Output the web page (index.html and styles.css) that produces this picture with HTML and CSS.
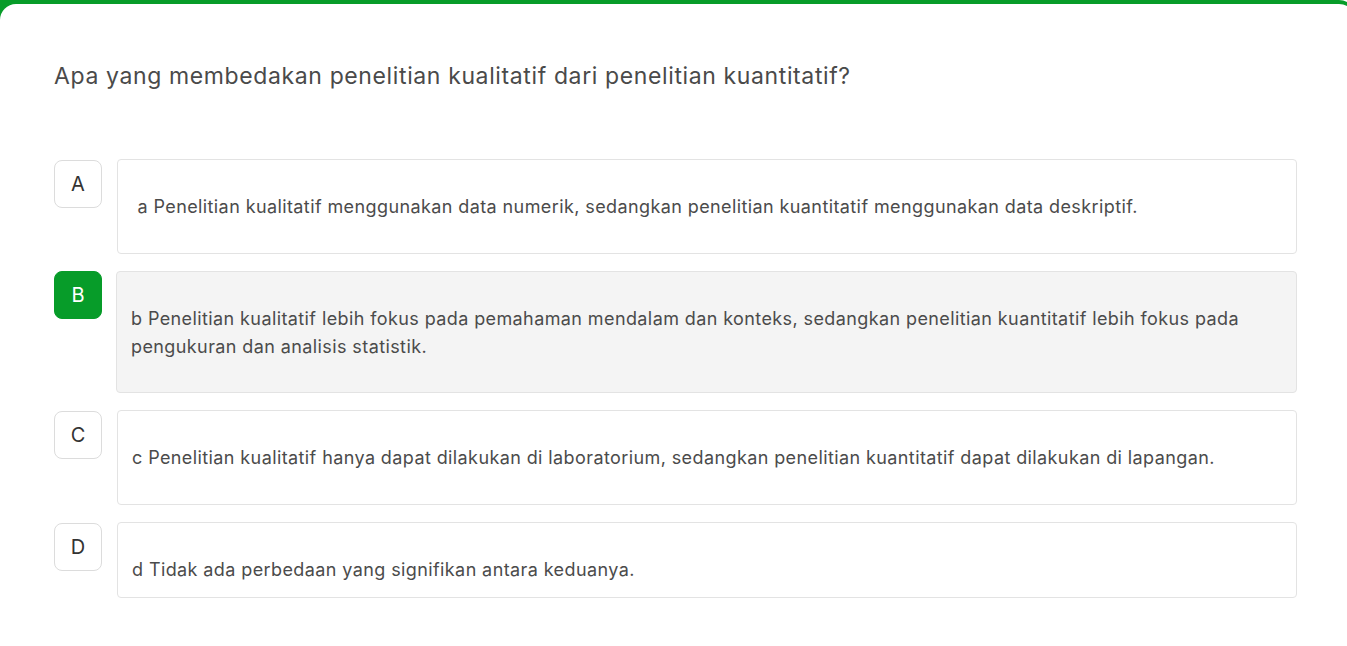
FILE: index.html
```html
<!DOCTYPE html>
<html lang="id">
<head>
<meta charset="utf-8">
<title>Soal</title>
<link rel="stylesheet" href="styles.css">
</head>
<body>
<div class="shell">
  <div class="card">
    <h1 class="question">Apa yang membedakan penelitian kualitatif dari penelitian kuantitatif?</h1>
    <div class="options">
      <div class="option">
        <div class="letter">A</div>
        <div class="answer"><p>&nbsp;a Penelitian kualitatif menggunakan data numerik, sedangkan penelitian kuantitatif menggunakan data deskriptif.</p></div>
      </div>
      <div class="option option--selected">
        <div class="letter">B</div>
        <div class="answer"><p>b Penelitian kualitatif lebih fokus pada pemahaman mendalam dan konteks, sedangkan penelitian kuantitatif lebih fokus pada pengukuran dan analisis statistik.</p></div>
      </div>
      <div class="option">
        <div class="letter">C</div>
        <div class="answer"><p>c Penelitian kualitatif hanya dapat dilakukan di laboratorium, sedangkan penelitian kuantitatif dapat dilakukan di lapangan.</p></div>
      </div>
      <div class="option">
        <div class="letter">D</div>
        <div class="answer answer--short"><p>d Tidak ada perbedaan yang signifikan antara keduanya.</p></div>
      </div>
    </div>
  </div>
</div>
</body>
</html>
```
FILE: styles.css
```css
html, body {
  margin: 0;
  padding: 0;
  overflow: hidden;
  background: #ffffff;
}
body {
  font-family: Inter, "Liberation Sans", sans-serif;
  color: #4a4a4a;
}
.shell {
  width: calc(100% + 8px);
  background: #079c29;
  border-top-right-radius: 16px;
  padding-top: 4px;
}
.card {
  background: #ffffff;
  border-radius: 16px 16px 0 0;
  padding: 56px 58px 40px 54px;
}
.question {
  margin: 0;
  font-size: 23px;
  font-weight: 400;
  line-height: 32px;
  letter-spacing: 0.62px;
  color: #4a4a4a;
}
.options {
  margin-top: 67px;
  display: flex;
  flex-direction: column;
  gap: 17px;
}
.option {
  display: flex;
  align-items: flex-start;
  gap: 15px;
}
.letter {
  flex: 0 0 auto;
  width: 46px;
  height: 46px;
  margin-top: 1px;
  border: 1px solid #dcdcdc;
  border-radius: 8px;
  display: flex;
  align-items: center;
  justify-content: center;
  font-size: 20px;
  color: #333333;
  background: #ffffff;
}
.option--selected .letter {
  background: #079c29;
  border-color: #079c29;
  color: #ffffff;
  margin-top: 0;
}
.answer {
  flex: 1 1 auto;
  border: 1px solid #e3e3e3;
  border-radius: 4px;
  background: #ffffff;
  padding: 33px 14px 32px 14px;
}
.option--selected .answer {
  background: #f4f4f4;
  margin-left: -1px;
  padding-bottom: 31px;
}
.answer--short {
  padding-bottom: 13px;
}
.answer p {
  margin: 0;
  font-size: 18px;
  line-height: 28px;
  letter-spacing: 0.4px;
  color: #4b4b4b;
}
```
